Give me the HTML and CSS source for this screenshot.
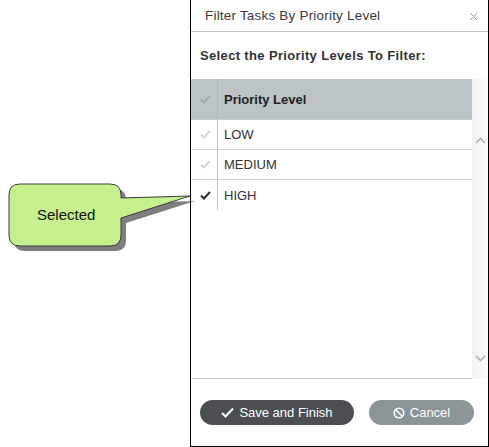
FILE: index.html
```html
<!DOCTYPE html>
<html>
<head>
<meta charset="utf-8">
<link rel="stylesheet" href="styles.css">
</head>
<body>
<div class="page">
  <div class="dialog">
    <div class="titlebar">
      <span class="title">Filter Tasks By Priority Level</span>
      <svg class="close" width="9" height="9" viewBox="0 0 9 9"><path d="M1 1L8 8M8 1L1 8" stroke="#9a9a9a" stroke-width="1"/></svg>
    </div>
    <div class="subtitle">Select the Priority Levels To Filter:</div>
    <div class="gridwrap">
      <div class="grid">
        <div class="row head">
          <div class="chk"><svg width="11" height="9" viewBox="0 0 11 9"><path d="M1 4.5L4 7.5L10 1" fill="none" stroke="#a3abae" stroke-width="2"/></svg></div>
          <div class="cell">Priority Level</div>
        </div>
        <div class="row">
          <div class="chk"><svg width="11" height="9" viewBox="0 0 11 9"><path d="M1 4.5L4 7.5L10 1" fill="none" stroke="#d6d6d6" stroke-width="2"/></svg></div>
          <div class="cell">LOW</div>
        </div>
        <div class="row">
          <div class="chk"><svg width="11" height="9" viewBox="0 0 11 9"><path d="M1 4.5L4 7.5L10 1" fill="none" stroke="#d6d6d6" stroke-width="2"/></svg></div>
          <div class="cell">MEDIUM</div>
        </div>
        <div class="row last">
          <div class="chk"><svg width="11" height="9" viewBox="0 0 11 9"><path d="M1 4.5L4 7.5L10 1" fill="none" stroke="#333333" stroke-width="2.2"/></svg></div>
          <div class="cell">HIGH</div>
        </div>
      </div>
      <div class="scrollbar">
        <svg class="arrow up" width="11" height="7" viewBox="0 0 11 7"><path d="M1 6L5.5 1.5L10 6" fill="none" stroke="#b0b0b0" stroke-width="1.6"/></svg>
        <svg class="arrow down" width="11" height="7" viewBox="0 0 11 7"><path d="M1 1L5.5 5.5L10 1" fill="none" stroke="#b0b0b0" stroke-width="1.6"/></svg>
      </div>
    </div>
    <div class="buttons">
      <button class="btn save"><svg width="13" height="11" viewBox="0 0 13 11"><path d="M1 6L4.5 9.5L12 1.5" fill="none" stroke="#ffffff" stroke-width="2"/></svg>Save and Finish</button>
      <button class="btn cancel"><svg width="12" height="12" viewBox="0 0 12 12"><circle cx="6" cy="6" r="4.8" fill="none" stroke="#ffffff" stroke-width="1.6"/><path d="M2.8 2.8L9.2 9.2" stroke="#ffffff" stroke-width="1.6"/></svg>Cancel</button>
    </div>
  </div>
  <div class="callout">
    <svg width="200" height="75" viewBox="0 0 200 75">
      <path d="M20 5 H110 Q121 5 121 16 V19 L190 17 L121 39 V56 Q121 67 110 67 H20 Q9 67 9 56 V16 Q9 5 20 5 Z" transform="translate(5,5)" fill="#5e5e5e" opacity="0.8"/>
      <path d="M20 5 H110 Q121 5 121 16 V19 L190 17 L121 39 V56 Q121 67 110 67 H20 Q9 67 9 56 V16 Q9 5 20 5 Z" fill="#c6ef8e" stroke="#3a3a3a" stroke-width="1"/>
    </svg>
    <span class="callout-text">Selected</span>
  </div>
</div>
</body>
</html>
```
FILE: styles.css
```css
html, body {
  margin: 0;
  padding: 0;
  background: #ffffff;
}
.page {
  position: relative;
  width: 489px;
  height: 447px;
  overflow: hidden;
  font-family: "Liberation Sans", Arial, sans-serif;
}
.dialog {
  margin-left: 190px;
  width: 297px;
  height: 446px;
  border: 1px solid #000;
  border-top: none;
  display: flex;
  flex-direction: column;
  background: #fff;
}
.titlebar {
  height: 32px;
  border-bottom: 1px solid #bfc6c9;
  display: flex;
  align-items: center;
  justify-content: space-between;
  padding: 0 10px 0 14px;
  box-sizing: border-box;
}
.title {
  font-size: 13.5px;
  color: #3a3a3a;
  letter-spacing: 0.2px;
}
.close {
  margin-top: 2px;
}
.subtitle {
  height: 47px;
  display: flex;
  align-items: center;
  padding-left: 9px;
  font-size: 13px;
  font-weight: bold;
  color: #333;
  letter-spacing: 0.35px;
}
.gridwrap {
  display: flex;
  height: 300px;
}
.grid {
  width: 281px;
  border-bottom: 1px solid #c8c8c8;
  box-sizing: border-box;
}
.row {
  display: flex;
  height: 30px;
  box-sizing: border-box;
  border-bottom: 1px solid #d4d4d4;
  font-size: 13px;
  color: #333;
}
.row.head {
  height: 41px;
  background: #bcc4c7;
  border-bottom: 1px solid #c8cdd0;
  font-weight: bold;
  color: #222;
}
.row.last {
  border-bottom: none;
}
.chk {
  width: 27px;
  border-right: 1px solid #c4c4c4;
  display: flex;
  align-items: center;
  justify-content: center;
  padding-left: 2px;
  box-sizing: border-box;
}
.row.head .chk {
  border-right-color: #adb5b8;
}
.cell {
  display: flex;
  align-items: center;
  padding-left: 6px;
}
.scrollbar {
  width: 16px;
  background: linear-gradient(to right, #f3f3f3, #fafafa);
  display: flex;
  flex-direction: column;
  justify-content: space-between;
  align-items: center;
  padding: 58px 0 17px;
  box-sizing: border-box;
}
.buttons {
  display: flex;
  justify-content: space-between;
  padding: 21px 14px 0 9px;
}
.btn {
  height: 25px;
  border: none;
  border-radius: 13px;
  color: #fff;
  font-family: "Liberation Sans", Arial, sans-serif;
  font-size: 13px;
  display: flex;
  align-items: center;
  justify-content: center;
  gap: 5px;
  padding: 0;
}
.btn.save {
  width: 154px;
  background: #4a4f52;
}
.btn.cancel {
  width: 105px;
  background: #8b9497;
}
.callout {
  position: absolute;
  left: 0;
  top: 179px;
  width: 200px;
  height: 75px;
}
.callout svg {
  position: absolute;
  left: 0;
  top: 0;
}
.callout-text {
  position: absolute;
  left: 37px;
  top: 27px;
  font-size: 15px;
  color: #111;
}
```
